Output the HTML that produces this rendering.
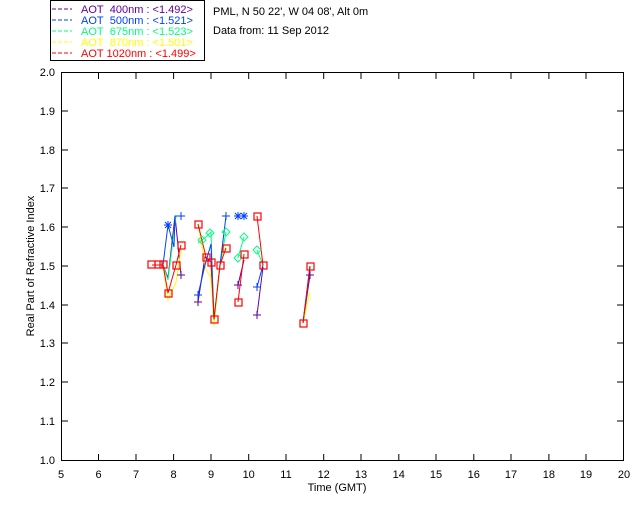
<!DOCTYPE html><html><head><style>body{margin:0;background:#fff}svg{display:block}text{font-family:"Liberation Sans",sans-serif;font-size:11px}</style></head><body>
<svg width="640" height="512" xmlns="http://www.w3.org/2000/svg">
<rect x="50.5" y="0.5" width="154" height="60" fill="none" stroke="#000"/>
<g stroke-width="1" stroke-dasharray="4,2">
<line x1="52" y1="9" x2="72" y2="9" stroke="#6000a0"/><line x1="52" y1="20" x2="72" y2="20" stroke="#0040ff"/><line x1="52" y1="31" x2="72" y2="31" stroke="#00ff80"/><line x1="52" y1="42" x2="72" y2="42" stroke="#ffff00"/><line x1="52" y1="53" x2="72" y2="53" stroke="#ff0000"/></g>
<text x="81" y="13" fill="#6000a0">AOT&#160;&#160;400nm : &lt;1.492&gt;</text>
<text x="81" y="24" fill="#0040ff">AOT&#160;&#160;500nm : &lt;1.521&gt;</text>
<text x="81" y="35" fill="#00ff80">AOT&#160;&#160;675nm : &lt;1.523&gt;</text>
<text x="81" y="46" fill="#ffff00">AOT&#160;&#160;870nm : &lt;1.501&gt;</text>
<text x="81" y="57" fill="#ff0000">AOT 1020nm : &lt;1.499&gt;</text>
<text x="213" y="15">PML, N 50 22', W 04 08', Alt 0m</text>
<text x="213" y="34">Data from: 11 Sep 2012</text>
<rect x="61.5" y="72.5" width="562" height="388" fill="none" stroke="#000"/>
<g font-size="10" text-anchor="middle">
<text x="61" y="478">5</text><text x="98.5" y="478">6</text><text x="136" y="478">7</text><text x="173.6" y="478">8</text><text x="211" y="478">9</text><text x="248.7" y="478">10</text><text x="286" y="478">11</text><text x="323.7" y="478">12</text><text x="361" y="478">13</text><text x="398.8" y="478">14</text><text x="436" y="478">15</text><text x="473.8" y="478">16</text><text x="511" y="478">17</text><text x="548.9" y="478">18</text><text x="586" y="478">19</text><text x="624" y="478">20</text>
<text x="337" y="491">Time (GMT)</text></g>
<g text-anchor="end" font-size="10"><text x="55" y="464">1.0</text><text x="55" y="425">1.1</text><text x="55" y="386">1.2</text><text x="55" y="347">1.3</text><text x="55" y="309">1.4</text><text x="55" y="270">1.5</text><text x="55" y="231">1.6</text><text x="55" y="192">1.7</text><text x="55" y="154">1.8</text><text x="55" y="115">1.9</text><text x="55" y="76">2.0</text></g>
<text transform="translate(34,266) rotate(-90)" text-anchor="middle" font-size="10">Real Part of Refractive Index</text>
<path stroke="#000" d="M98.5 460v-6M136 460v-6M173.6 460v-6M211 460v-6M248.7 460v-6M286 460v-6M323.7 460v-6M361 460v-6M398.8 460v-6M436 460v-6M473.8 460v-6M511 460v-6M548.9 460v-6M586 460v-6M98.5 73v6M136 73v6M173.6 73v6M211 73v6M248.7 73v6M286 73v6M323.7 73v6M361 73v6M398.8 73v6M436 73v6M473.8 73v6M511 73v6M548.9 73v6M586 73v6M62 421h6M62 382h6M62 343h6M62 305h6M62 266h6M62 227h6M62 188h6M62 150h6M62 111h6M623 421h-6M623 382h-6M623 343h-6M623 305h-6M623 266h-6M623 227h-6M623 188h-6M623 150h-6M623 111h-6"/>
<g fill="none">
<path stroke="#6000a0" d="M152,265 L163,265 L168,278 L175,216 L181,275 M198,302 L205,257 L211,262 L214,320 L220,265 M238,285 L244,260 M257,315 L263,267 M303,323 L310,275"/>
<path stroke="#ffff00" d="M152,265 L163,265 L168,300 L176,282 L181,250 M198,224 L206,270 L211,277 L214,326 L220,265 L226,246 M303,323 L310,292"/>
<path stroke="#00ff80" d="M152,265 L163,265 L168,280 L176,216 L181,216 M198,243 L206,237 L211,232 L214,320 L220,265 L226,232 M238,258 L244,237 M257,250 L263,265 M303,323 L310,266"/>
<path stroke="#0040ff" d="M152,265 L163,265 L168,225 L174,247 L175,216 L181,216 M198,295 L205,265 L211,244 L214,319 M220,265 L226,216 M257,287 L263,265 M303,323 L310,266"/>
<path stroke="#ff0000" d="M152,265 L163,265 L168,293 L176,265 L181,245 M198,224 L206,257 L211,262 L214,319 L220,265 L226,248 M238,302 L244,254 M257,216 L263,265 M303,323 L310,266"/>
<g stroke="#00ff80"><path d="M202 236l4 4-4 4-4-4zM210 229l4 4-4 4-4-4zM226 228l4 4-4 4-4-4zM244 233l4 4-4 4-4-4zM257 246l4 4-4 4-4-4zM238 254l4 4-4 4-4-4z"/></g>
<g stroke="#6000a0"><path d="M177 275h8M181 271v8M194 302h8M198 298v8M234 285h8M238 281v8M253 315h8M257 311v8M306 275h8M310 271v8"/></g>
<g stroke="#ff0000" stroke-width="1.2"><rect x="148" y="261" width="7" height="7"/><rect x="155" y="261" width="7" height="7"/><rect x="160" y="261" width="7" height="7"/><rect x="165" y="290" width="7" height="7"/><rect x="173" y="262" width="7" height="7"/><rect x="178" y="242" width="7" height="7"/><rect x="195" y="221" width="7" height="7"/><rect x="203" y="254" width="7" height="7"/><rect x="208" y="259" width="7" height="7"/><rect x="211" y="316" width="7" height="7"/><rect x="217" y="262" width="7" height="7"/><rect x="223" y="245" width="7" height="7"/><rect x="235" y="299" width="7" height="7"/><rect x="241" y="251" width="7" height="7"/><rect x="254" y="213" width="7" height="7"/><rect x="260" y="262" width="7" height="7"/><rect x="300" y="320" width="7" height="7"/><rect x="307" y="263" width="7" height="7"/></g>
<g stroke="#0040ff"><path d="M164 225h8M168 221v8M165 222l6 6M171 222l-6 6M177 216h8M181 212v8M194 295h8M198 291v8M222 216h8M226 212v8M234 216h8M240 216h8M253 287h8M257 283v8M238 212v8M244 212v8M235 213l6 6M241 213l-6 6M241 213l6 6M247 213l-6 6"/></g>
</g>
</svg></body></html>
